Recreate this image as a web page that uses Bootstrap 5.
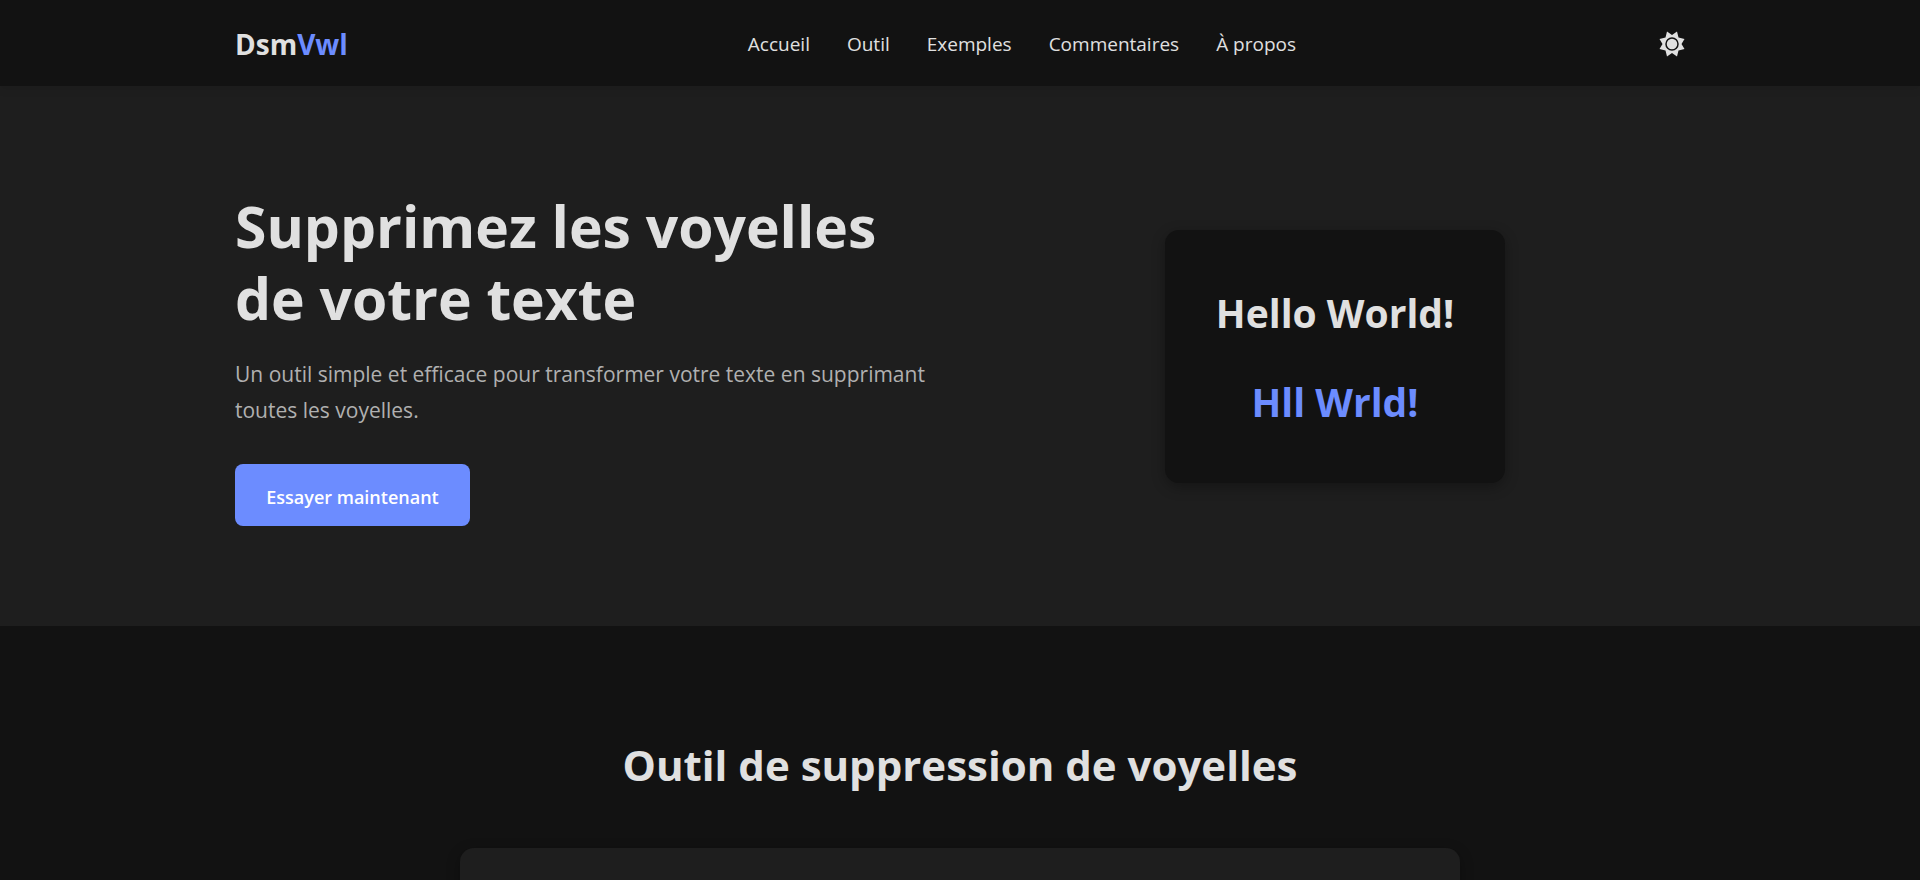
<!DOCTYPE html>
<html lang="fr" data-bs-theme="dark">
<head>
<meta charset="utf-8">
<meta name="viewport" content="width=device-width, initial-scale=1">
<title>DsmVwl</title>
<link href="https://cdn.jsdelivr.net/npm/bootstrap@5.3.0/dist/css/bootstrap.min.css" rel="stylesheet">
<style>
:root { --page: #121212; --surface: #1e1e1e; --ink: #e0e0e0; --muted: #b0b0b0; --accent: #6c8cff; }
body { background: var(--page); color: var(--ink); font-family: "Open Sans", "Noto Sans", sans-serif; font-size: 18px; overflow-x: hidden; }
h1, h2 { color: var(--ink); font-weight: 700; }
.wrap { max-width: 1486px; padding-left: 18px; padding-right: 18px; }
.site-header { background: var(--page); box-shadow: 0 2px 10px rgba(0,0,0,.1); padding: 21px 0 19px; }
.logo { font-size: 28px; line-height: 46px; font-weight: 700; color: var(--ink); }
.logo span, .accent-text { color: var(--accent); }
.menu { font-size: 19px; }
.menu li { margin-left: 37px; }
.menu a { color: var(--ink); text-decoration: none; }
.theme-toggle, .theme-toggle:hover { color: var(--ink); line-height: 0; }
.hero { background: var(--surface); padding: 100px 0; }
.hero-row { column-gap: 50px; }
.hero-text { padding-top: 4px; }
.hero h1 { font-size: 57px; line-height: 72px; margin-bottom: 22px; }
.hero p { font-size: 21px; line-height: 36px; color: var(--muted); margin-bottom: 36px; }
.btn-try { background: var(--accent); color: #fff; font-size: 18px; line-height: 26px; font-weight: 600; padding: 20px 30px 16px; min-width: 235px; border: 0; border-radius: 8px; }
.demo { background: var(--page); border-radius: 14px; box-shadow: 0 4px 14px rgba(0,0,0,.3); width: 340px; padding: 55px 36px 53px; gap: 33px; font-size: 39px; line-height: 56px; font-weight: 700; }
.tool { padding: 108px 0; }
.tool h2 { font-size: 42px; line-height: 62px; margin-bottom: 52px; }
.tool-panel { background: var(--surface); max-width: 1000px; min-height: 400px; border-radius: 14px; box-shadow: 0 4px 14px rgba(0,0,0,.3); }
</style>
</head>
<body>
<header class="site-header position-relative">
  <div class="container-fluid wrap d-flex justify-content-between align-items-center">
    <a class="logo text-decoration-none" href="#">Dsm<span>Vwl</span></a>
    <nav><ul class="menu list-unstyled d-flex mb-0">
      <li><a href="#accueil">Accueil</a></li>
      <li><a href="#outil">Outil</a></li>
      <li><a href="#exemples">Exemples</a></li>
      <li><a href="#commentaires">Commentaires</a></li>
      <li><a href="#apropos">À propos</a></li>
    </ul></nav>
    <button class="theme-toggle btn p-0 border-0" type="button" aria-label="Thème">
      <svg width="26" height="26" viewBox="0 0 26 26" fill="currentColor" aria-hidden="true"><path d="M8 .5l5 3.500 5-3.500 1.500 6 6 1.500-3 5 3 5-6 1.500-1.500 6-5-3.500-5 3.500-1.500-6-6-1.500 3-5-3-5 6-1.500z"/><circle cx="13" cy="13" r="6" fill="none" stroke="#121212" stroke-width="1.500"/></svg>
    </button>
  </div>
</header>
<main>
  <section class="hero" id="accueil">
    <div class="container-fluid wrap">
      <div class="row g-0 hero-row align-items-center">
        <div class="col hero-text">
          <h1>Supprimez les voyelles de votre texte</h1>
          <p>Un outil simple et efficace pour transformer votre texte en supprimant toutes les voyelles.</p>
          <a class="btn btn-try" href="#outil">Essayer maintenant</a>
        </div>
        <div class="col d-flex justify-content-center">
          <div class="demo text-center d-flex flex-column">
            <div>Hello World!</div>
            <div class="accent-text">Hll Wrld!</div>
          </div>
        </div>
      </div>
    </div>
  </section>
  <section class="tool" id="outil">
    <div class="container-fluid wrap">
      <h2 class="text-center">Outil de suppression de voyelles</h2>
      <div class="tool-panel mx-auto"></div>
    </div>
  </section>
</main>
</body>
</html>
